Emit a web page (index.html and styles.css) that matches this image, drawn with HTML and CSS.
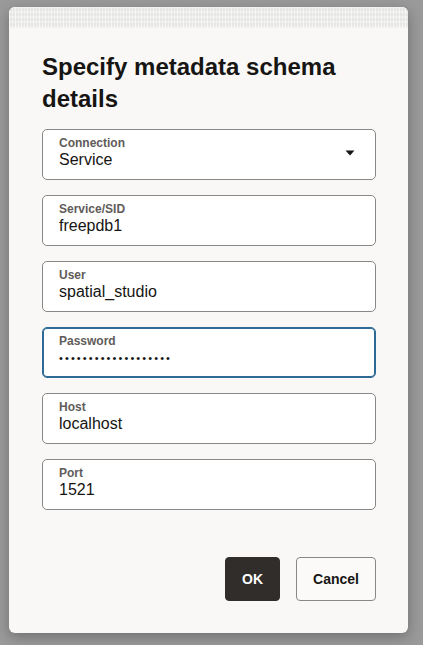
FILE: index.html
```html
<!DOCTYPE html>
<html lang="en">
<head>
<meta charset="utf-8">
<title>Specify metadata schema details</title>
<link rel="stylesheet" href="styles.css">
</head>
<body>
<div class="dialog" role="dialog" aria-labelledby="dlg-title">
  <div class="dialog-strip"></div>
  <div class="dialog-body">
    <h1 id="dlg-title" class="dialog-title">Specify metadata schema details</h1>
    <div class="fields">
      <div class="field field-select">
        <span class="field-label">Connection</span>
        <span class="field-value">Service</span>
        <svg class="field-arrow" width="10" height="6" viewBox="0 0 10 6" aria-hidden="true"><path d="M0.5 0.5h9L5 5.5z" fill="#161513"/></svg>
      </div>
      <div class="field">
        <span class="field-label">Service/SID</span>
        <span class="field-value">freepdb1</span>
      </div>
      <div class="field">
        <span class="field-label">User</span>
        <span class="field-value">spatial_studio</span>
      </div>
      <div class="field field-focused">
        <span class="field-label">Password</span>
        <span class="field-value field-dots">•••••••••••••••••••</span>
      </div>
      <div class="field">
        <span class="field-label">Host</span>
        <span class="field-value">localhost</span>
      </div>
      <div class="field">
        <span class="field-label">Port</span>
        <span class="field-value">1521</span>
      </div>
    </div>
    <div class="dialog-footer">
      <button class="btn btn-primary" type="button">OK</button>
      <button class="btn btn-secondary" type="button">Cancel</button>
    </div>
  </div>
</div>
</body>
</html>
```

FILE: styles.css
```css
html, body {
  margin: 0;
  height: 100%;
}
body {
  background: #9a9a9a;
  padding: 7px 0 0 9px;
  box-sizing: border-box;
  font-family: "Liberation Sans", Arial, Helvetica, sans-serif;
  color: #161513;
  overflow: hidden;
}
.dialog {
  width: 399px;
  height: 626px;
  background: #f9f8f6;
  border-radius: 6px;
  box-shadow: 0 4px 14px rgba(0, 0, 0, 0.28);
  overflow: hidden;
  display: flex;
  flex-direction: column;
}
.dialog-strip {
  height: 21px;
  flex: none;
  background:
    repeating-linear-gradient(90deg, rgba(255,255,255,0.6) 0 1px, transparent 1px 3px, rgba(255,255,255,0.4) 3px 4px, transparent 4px 6px),
    repeating-linear-gradient(0deg, rgba(255,255,255,0.3) 0 2px, transparent 2px 5px),
    #e6e6e5;
}
.dialog-body {
  padding: 23px 32px 32px 33px;
  display: flex;
  flex-direction: column;
}
.dialog-title {
  margin: 0;
  font-size: 24px;
  line-height: 32px;
  font-weight: 700;
  color: #161513;
}
.fields {
  margin-top: 14px;
  display: flex;
  flex-direction: column;
  gap: 15px;
}
.field {
  position: relative;
  height: 51px;
  box-sizing: border-box;
  background: #ffffff;
  border: 1px solid #8a8886;
  border-radius: 5px;
  padding: 6px 16px 0 16px;
  display: flex;
  flex-direction: column;
}
.field-focused {
  border-color: #2d6a95;
  box-shadow: inset 0 0 0 1px #2d6a95;
}
.field-label {
  font-size: 12px;
  line-height: 14px;
  font-weight: 700;
  color: #5f5c59;
}
.field-value {
  font-size: 16px;
  line-height: 20px;
  color: #161513;
}
.field-dots {
  font-size: 11px;
  letter-spacing: 2.1px;
}
.field-arrow {
  position: absolute;
  right: 20px;
  top: 20px;
}
.dialog-footer {
  margin-top: 47px;
  display: flex;
  justify-content: flex-end;
  gap: 16px;
}
.btn {
  height: 44px;
  box-sizing: border-box;
  border-radius: 4px;
  font-family: "Liberation Sans", Arial, Helvetica, sans-serif;
  font-size: 14px;
  font-weight: 700;
  padding: 0 16px;
  cursor: pointer;
}
.btn-primary {
  background: #312d2a;
  color: #ffffff;
  border: 1px solid #312d2a;
}
.btn-secondary {
  background: #fbfaf9;
  color: #161513;
  border: 1px solid #8a8886;
}
```
